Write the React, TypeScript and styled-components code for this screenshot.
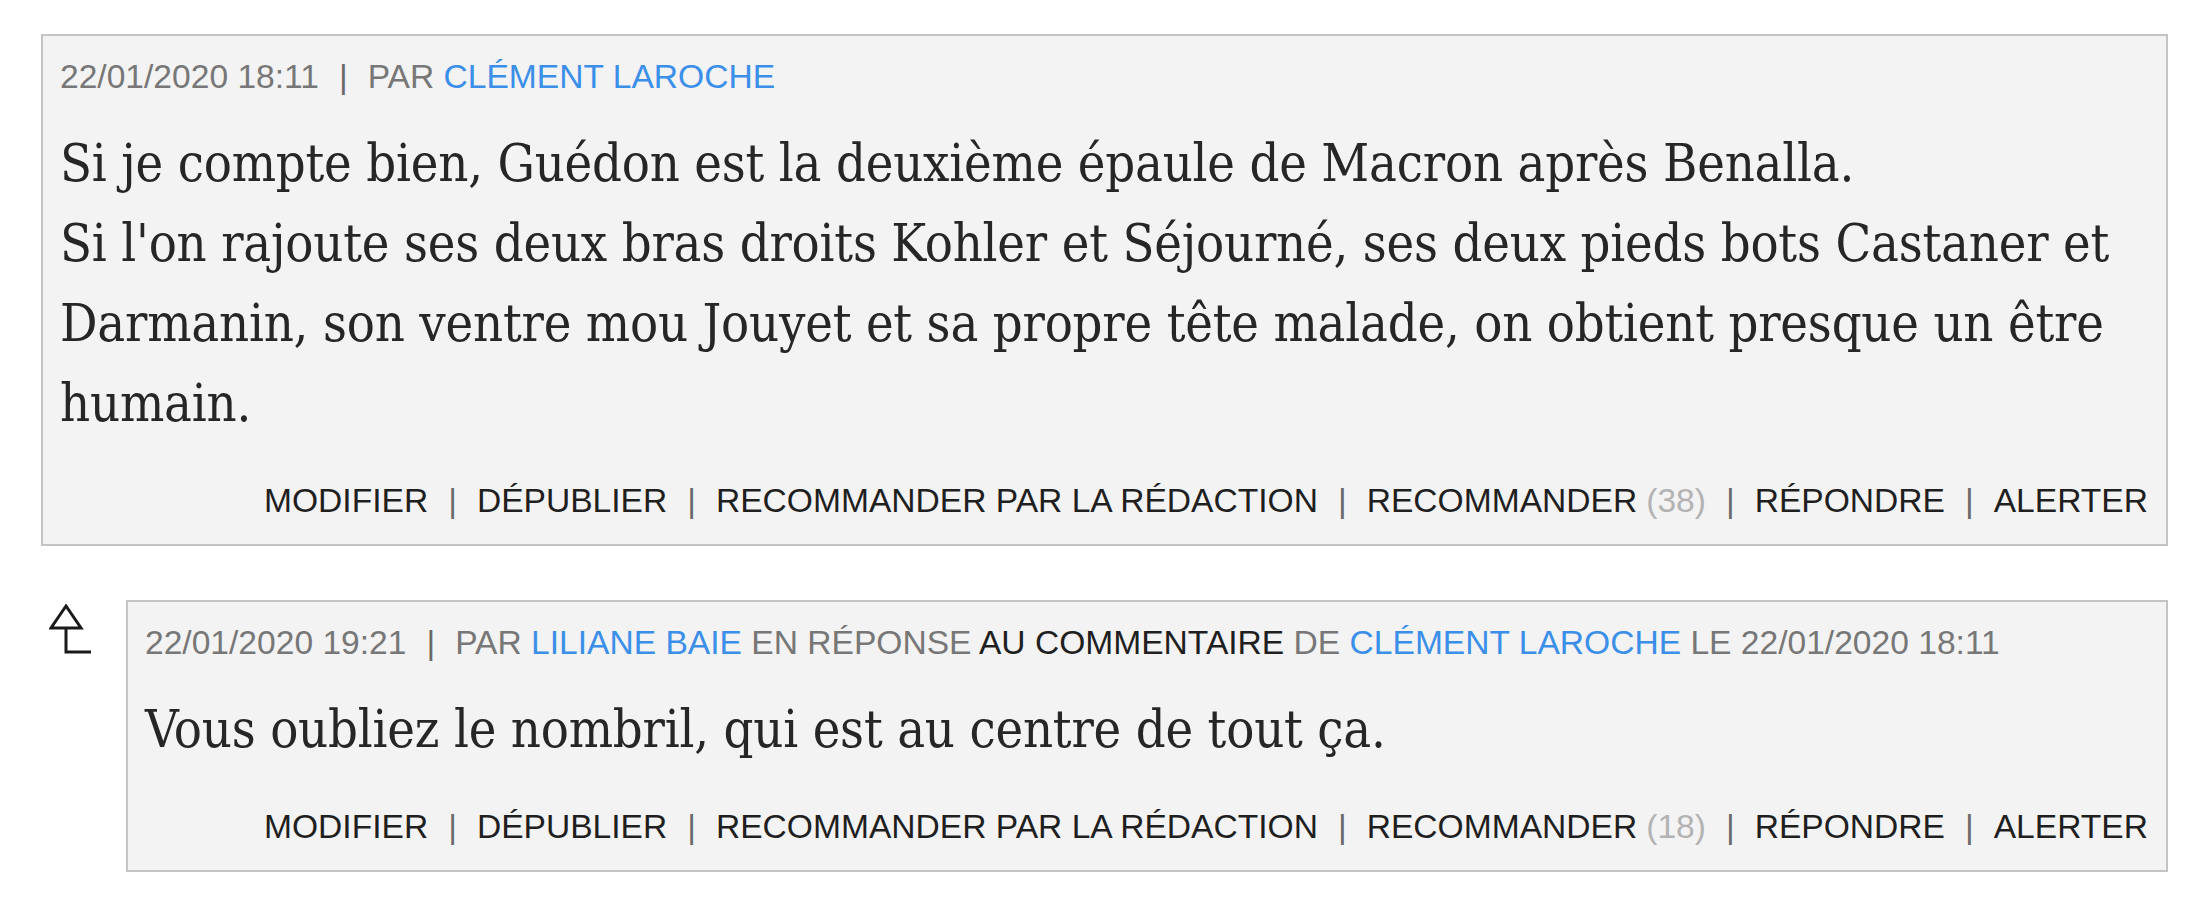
import React from 'react';
import styled, { createGlobalStyle } from 'styled-components';

const Global = createGlobalStyle`
  html, body { margin: 0; padding: 0; background: #ffffff; }
  body { font-family: "Liberation Sans", Arial, sans-serif; }
`;

const Thread = styled.div`
  display: flex;
  flex-direction: column;
  gap: 54px;
  padding: 34px 32px 0 41px;
`;

const ReplyRow = styled.div`
  display: flex;
  align-items: flex-start;
`;

const ReplyIconCell = styled.div`
  width: 85px;
  flex: 0 0 85px;
  padding: 4px 0 0 8px;
  box-sizing: border-box;
  svg { display: block; }
`;

const Card = styled.article`
  flex: 1;
  background: #f3f3f3;
  border: 2px solid #c4c4c4;
  padding: 21px 18px 23px 17px;
`;

const Meta = styled.div`
  font-size: 33.6px;
  line-height: 40px;
  color: #777777;
  text-transform: uppercase;
  white-space: nowrap;
`;

type Tone = 'muted' | 'dark' | 'link' | 'faint';

const toneColor: Record<Tone, string> = {
  muted: '#777777',
  dark: '#1f1f1f',
  link: '#3b8fe8',
  faint: '#b3b3b3',
};

const Word = styled.span<{ $tone: Tone }>`
  color: ${(p) => toneColor[p.$tone]};
`;

const Sep = styled.span`
  color: #6a6a6a;
  margin: 0 20px;
`;

const Body = styled.div`
  margin: 26px 0 38px;
  font-family: "DejaVu Serif", "Liberation Serif", serif;
  font-stretch: condensed;
  font-size: 52px;
  letter-spacing: -0.2px;
  line-height: 80px;
  color: #262626;
`;

const Actions = styled.div`
  display: flex;
  justify-content: flex-end;
  align-items: baseline;
  font-size: 33.6px;
  line-height: 40px;
  color: #1f1f1f;
  text-transform: uppercase;
  white-space: nowrap;
`;

const Action = styled.span``;

const Count = styled.span`
  color: #b3b3b3;
  margin-left: 9px;
`;

const ReplyArrow = () => (
  <svg width="44" height="50" viewBox="0 0 44 50" fill="none">
    <path d="M17 2 L2 24 L32 24 Z" stroke="#1a1a1a" strokeWidth="3" strokeLinejoin="miter" />
    <path d="M17 24 L17 48 L42 48" stroke="#1a1a1a" strokeWidth="3" />
  </svg>
);

type ActionBarProps = { count: number };

const ActionBar = ({ count }: ActionBarProps) => (
  <Actions>
    <Action>Modifier</Action>
    <Sep>|</Sep>
    <Action>Dépublier</Action>
    <Sep>|</Sep>
    <Action>Recommander par la rédaction</Action>
    <Sep>|</Sep>
    <Action>
      Recommander<Count>({count})</Count>
    </Action>
    <Sep>|</Sep>
    <Action>Répondre</Action>
    <Sep>|</Sep>
    <Action>Alerter</Action>
  </Actions>
);

export default function App() {
  return (
    <>
      <Global />
      <Thread>
        <Card>
          <Meta>
            <Word $tone="muted">22/01/2020 18:11</Word>
            <Sep>|</Sep>
            <Word $tone="muted">par </Word>
            <Word $tone="link">Clément Laroche</Word>
          </Meta>
          <Body>
            Si je compte bien, Guédon est la deuxième épaule de Macron après Benalla.
            <br />
            Si l'on rajoute ses deux bras droits Kohler et Séjourné, ses deux pieds bots Castaner et
            Darmanin, son ventre mou Jouyet et sa propre tête malade, on obtient presque un être
            humain.
          </Body>
          <ActionBar count={38} />
        </Card>
        <ReplyRow>
          <ReplyIconCell>
            <ReplyArrow />
          </ReplyIconCell>
          <Card>
            <Meta>
              <Word $tone="muted">22/01/2020 19:21</Word>
              <Sep>|</Sep>
              <Word $tone="muted">par </Word>
              <Word $tone="link">Liliane Baie</Word>
              <Word $tone="muted"> en réponse </Word>
              <Word $tone="dark">au commentaire</Word>
              <Word $tone="muted"> de </Word>
              <Word $tone="link">Clément Laroche</Word>
              <Word $tone="muted"> le 22/01/2020 18:11</Word>
            </Meta>
            <Body>Vous oubliez le nombril, qui est au centre de tout ça.</Body>
            <ActionBar count={18} />
          </Card>
        </ReplyRow>
      </Thread>
    </>
  );
}
